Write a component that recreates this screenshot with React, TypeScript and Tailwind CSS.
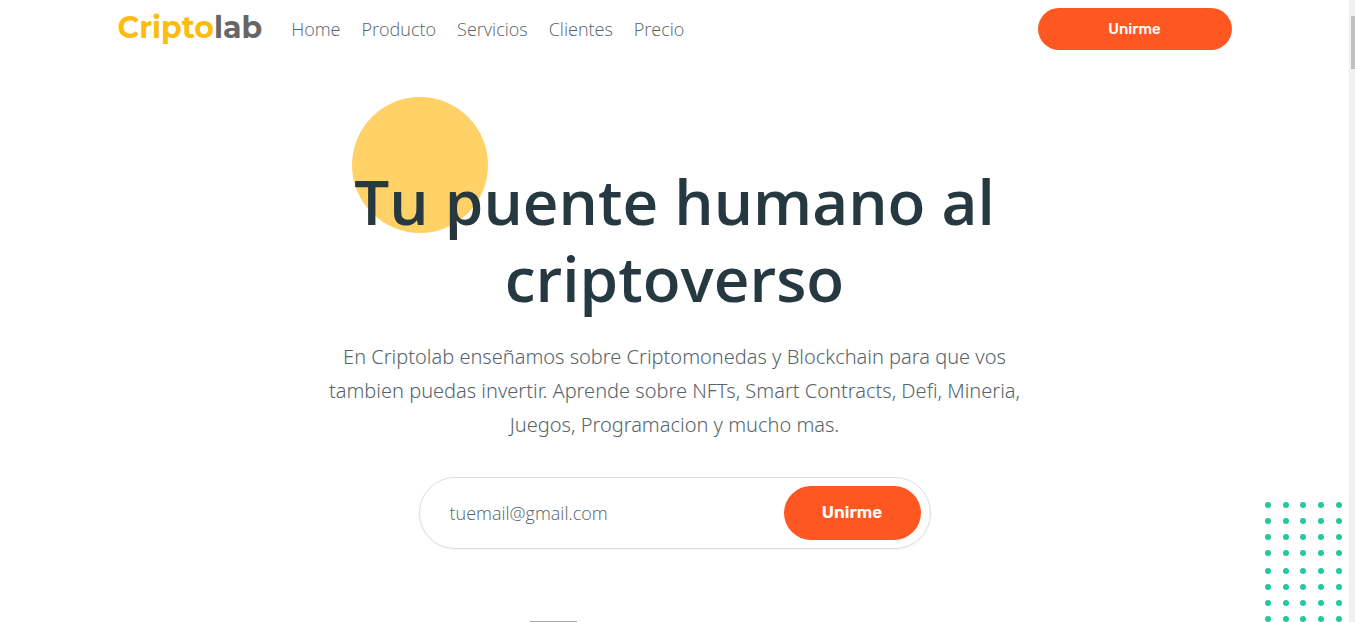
const links = ['Home', 'Producto', 'Servicios', 'Clientes', 'Precio'];
const dotRows = [5, 21, 37, 53, 71, 87, 103, 119];
const dotColumns = [5, 23, 40, 58, 76];

function DotPattern() {
  return (
    <svg
      className="absolute right-1 bottom-0 h-[122px] w-[82px]"
      viewBox="0 0 82 122"
      fill="#20c9a0"
      aria-hidden="true"
    >
      {dotRows.map((y) => dotColumns.map((x) => <circle key={`${x}-${y}`} cx={x} cy={y} r="3" />))}
    </svg>
  );
}

function Header() {
  return (
    <header className="mx-auto flex h-[58px] w-full max-w-[1114px] items-center">
      <a href="#" className="pb-[2px] font-['Montserrat','Inter',sans-serif] text-[30px] leading-9 font-bold text-[#fdbc12]">
        Cripto<span className="text-[#666666]">lab</span>
      </a>
      <nav className="ml-[29px] flex gap-[21px] text-lg font-light text-[#56646a]">
        {links.map((link) => (
          <a key={link} href={`#${link.toLowerCase()}`}>
            {link}
          </a>
        ))}
      </nav>
      <button
        type="button"
        className="ml-auto h-[42px] w-[194px] rounded-full bg-[#ff5722] font-['Rubik','Inter',sans-serif] text-[15px] font-medium text-white"
      >
        Unirme
      </button>
    </header>
  );
}

function Hero() {
  return (
    <section className="mx-auto flex w-full max-w-[720px] flex-col items-center pt-[105px] text-center">
      <h1 className="relative z-0 w-full text-[62px] leading-[77px] font-semibold text-[#263840]">
        <span className="absolute -top-[66px] left-[37px] -z-10 size-[136px] rounded-full bg-[#ffd166]" />
        Tu puente humano al criptoverso
      </h1>
      <p className="mt-[23px] font-['Noto_Sans',sans-serif] text-xl leading-[34px] font-light text-[#56646a]">
        En Criptolab enseñamos sobre Criptomonedas y Blockchain para que vos tambien puedas invertir. Aprende sobre NFTs,
        Smart Contracts, Defi, Mineria, Juegos, Programacion y mucho mas.
      </p>
      <form
        className="mt-[35px] flex h-[72px] w-full max-w-[512px] items-center rounded-full border border-[#dcdde3] pr-[9px] pl-[30px] shadow-xs"
        onSubmit={(event) => event.preventDefault()}
      >
        <input
          type="email"
          aria-label="Email"
          placeholder="tuemail@gmail.com"
          className="min-w-0 flex-1 bg-transparent text-lg font-light outline-none placeholder:text-[#56646a]"
        />
        <button
          type="submit"
          className="h-[54px] w-[137px] rounded-full bg-[#ff5722] font-['Rubik','Inter',sans-serif] text-[17px] font-semibold text-white"
        >
          Unirme
        </button>
      </form>
    </section>
  );
}

export default function App() {
  return (
    <div className="flex h-screen overflow-hidden bg-white font-['Open_Sans',sans-serif]">
      <div className="relative flex min-w-0 flex-1 flex-col">
        <Header />
        <Hero />
        <DotPattern />
        <div className="mx-auto mt-auto flex w-full max-w-[289px]">
          <div className="h-px w-[47px] bg-[#a6a6a6]" />
        </div>
      </div>
      <div className="w-[6px] bg-[#f1f1f1] pt-4 pl-[2px]">
        <div className="h-[53px] bg-[#c1c1c1]" />
      </div>
    </div>
  );
}
